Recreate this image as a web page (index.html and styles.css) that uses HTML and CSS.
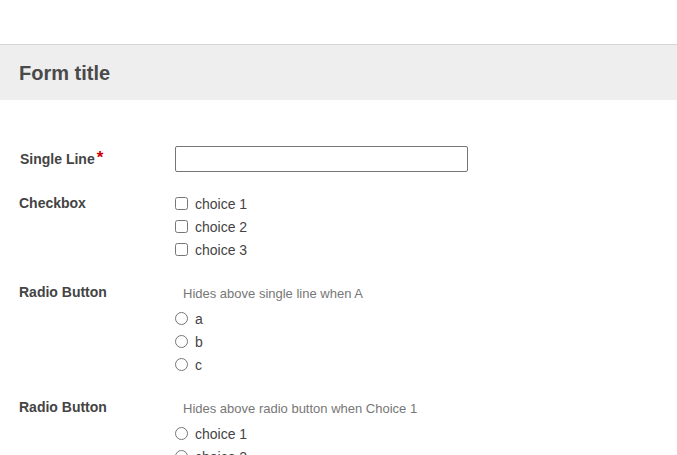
FILE: index.html
```html
<!DOCTYPE html>
<html lang="en">
<head>
<meta charset="utf-8">
<title>Form</title>
<link rel="stylesheet" href="styles.css">
</head>
<body>
<div class="topbar"></div>
<header class="form-header"><h1 class="form-title">Form title</h1></header>
<form class="form">
  <div class="field field-text">
    <label class="field-label" for="single">Single Line<span class="req">*</span></label>
    <div class="field-body"><input class="text-input" id="single" type="text"></div>
  </div>
  <div class="field">
    <div class="field-label lh23">Checkbox</div>
    <div class="field-body">
      <label class="option"><input type="checkbox" class="ctl"><span>choice 1</span></label>
      <label class="option"><input type="checkbox" class="ctl"><span>choice 2</span></label>
      <label class="option"><input type="checkbox" class="ctl"><span>choice 3</span></label>
    </div>
  </div>
  <div class="field">
    <div class="field-label">Radio Button</div>
    <div class="field-body">
      <div class="hint">Hides above single line when A</div>
      <label class="option"><input type="radio" name="r1" class="ctl"><span>a</span></label>
      <label class="option"><input type="radio" name="r1" class="ctl"><span>b</span></label>
      <label class="option"><input type="radio" name="r1" class="ctl"><span>c</span></label>
    </div>
  </div>
  <div class="field">
    <div class="field-label">Radio Button</div>
    <div class="field-body">
      <div class="hint">Hides above radio button when Choice 1</div>
      <label class="option"><input type="radio" name="r2" class="ctl"><span>choice 1</span></label>
      <label class="option"><input type="radio" name="r2" class="ctl"><span>choice 2</span></label>
    </div>
  </div>
</form>
</body>
</html>
```
FILE: styles.css
```css
html, body {
  margin: 0;
  padding: 0;
  background: #fff;
  font-family: "Liberation Sans", Arial, sans-serif;
  color: #444;
}
.topbar {
  height: 44px;
}
.form-header {
  border-top: 1px solid #d6d6d6;
  background: #eeeeee;
  height: 55px;
  display: flex;
  align-items: center;
  padding-left: 19px;
}
.form-title {
  margin: 0;
  font-size: 20px;
  font-weight: bold;
  color: #4a4a4a;
  line-height: 24px;
}
.form {
  padding: 46px 0 0 19px;
}
.field {
  display: grid;
  grid-template-columns: 156px 1fr;
  align-items: start;
  margin-bottom: 23px;
}
.field-text {
  align-items: center;
  margin-bottom: 20px;
}
.field-label {
  font-size: 14px;
  font-weight: bold;
  line-height: 16px;
  color: #444;
}
.field-text .field-label {
  padding-left: 1px;
}
.lh23 {
  line-height: 23px;
}
.req {
  color: #c00;
  font-size: 17px;
  vertical-align: top;
  line-height: 14px;
  margin-left: 2px;
}
.text-input {
  display: block;
  box-sizing: border-box;
  width: 293px;
  height: 26px;
  margin: 0;
  border: 1px solid #767676;
  border-radius: 2px;
  font: 14px "Liberation Sans", Arial, sans-serif;
}
.field-body {
  display: flex;
  flex-direction: column;
}
.hint {
  font-size: 13px;
  line-height: 20px;
  color: #777;
  padding-left: 8px;
  margin-bottom: 3px;
}
.option {
  display: flex;
  align-items: center;
  height: 23px;
  font-size: 14px;
  color: #444;
}
.ctl {
  width: 13px;
  height: 13px;
  margin: 0 7px 0 0;
}
```
